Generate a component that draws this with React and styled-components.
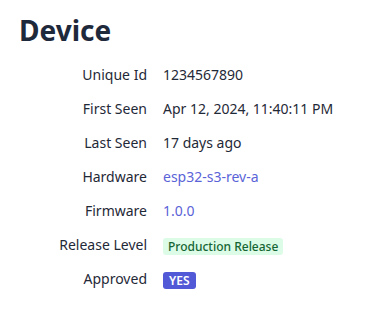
import React from 'react';
import styled, { createGlobalStyle } from 'styled-components';

const GlobalStyle = createGlobalStyle`
    body {
        margin: 0;
        background: #ffffff;
        font-family: "Noto Sans", "Open Sans", sans-serif;
        color: #1f2937;
    }
`;

const Page = styled.div`
    padding: 12px 19px;
`;

const Title = styled.h1`
    margin: 0 0 10px 0;
    font-size: 28px;
    line-height: 36px;
    font-weight: 700;
    color: #1e293b;
`;

const Details = styled.dl`
    margin: 0;
    display: grid;
    grid-template-columns: 128px 1fr;
    column-gap: 16px;
`;

const Label = styled.dt`
    text-align: right;
    font-size: 14px;
    line-height: 20px;
    padding: 7px 0;
    color: #1f2937;
`;

const Value = styled.dd`
    margin: 0;
    font-size: 14px;
    line-height: 20px;
    padding: 7px 0;
    color: ${(p) => (p.$link ? '#5a63d8' : '#1f2937')};
`;

const Badge = styled.span`
    display: inline-block;
    vertical-align: middle;
    font-size: 12px;
    line-height: 17px;
    padding: 0 ${(p) => (p.$tone === 'green' ? 5 : 6)}px;
    border-radius: 3px;
    background: ${(p) => (p.$tone === 'green' ? '#dcfce7' : '#5159d6')};
    color: ${(p) => (p.$tone === 'green' ? '#166534' : '#ffffff')};
    font-weight: ${(p) => (p.$tone === 'green' ? 500 : 600)};
`;

const rows = [
    ['Unique Id', '1234567890'],
    ['First Seen', 'Apr 12, 2024, 11:40:11 PM'],
    ['Last Seen', '17 days ago'],
    ['Hardware', 'esp32-s3-rev-a', 'link'],
    ['Firmware', '1.0.0', 'link'],
];

const App = () => {
    return (
        <Page>
            <GlobalStyle />
            <Title>Device</Title>
            <Details>
                {rows.map(([label, value, kind]) => (
                    <React.Fragment key={label}>
                        <Label>{label}</Label>
                        <Value $link={kind === 'link'}>{value}</Value>
                    </React.Fragment>
                ))}
                <Label>Release Level</Label>
                <Value>
                    <Badge $tone="green">Production Release</Badge>
                </Value>
                <Label>Approved</Label>
                <Value>
                    <Badge $tone="blue">YES</Badge>
                </Value>
            </Details>
        </Page>
    );
};

export default App;
